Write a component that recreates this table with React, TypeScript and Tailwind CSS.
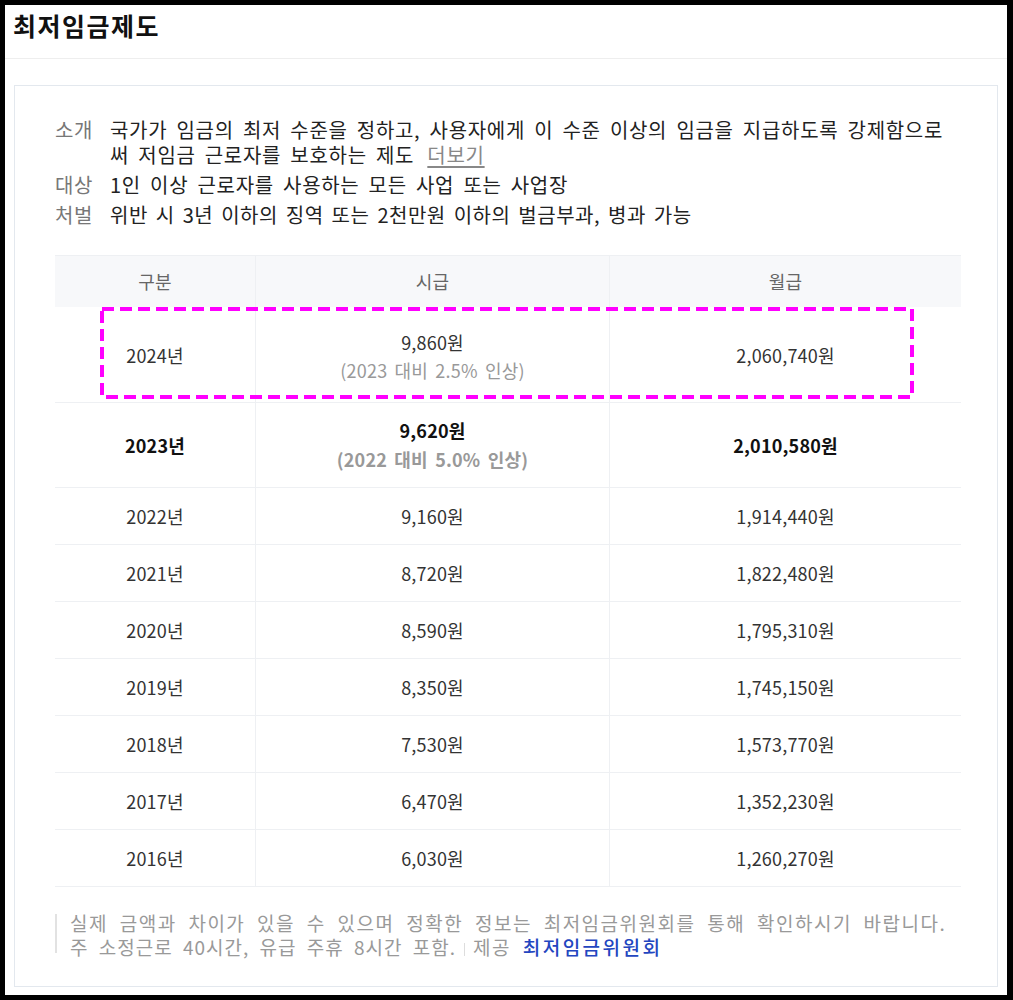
import React from "react";

const rows = [
  { y: "2022년", h: "9,160원", m: "1,914,440원" },
  { y: "2021년", h: "8,720원", m: "1,822,480원" },
  { y: "2020년", h: "8,590원", m: "1,795,310원" },
  { y: "2019년", h: "8,350원", m: "1,745,150원" },
  { y: "2018년", h: "7,530원", m: "1,573,770원" },
  { y: "2017년", h: "6,470원", m: "1,352,230원" },
  { y: "2016년", h: "6,030원", m: "1,260,270원" },
];

const font = { fontFamily: '"Noto Sans CJK KR", "Noto Sans", sans-serif' };

export default function App() {
  return (
    <div
      className="w-[1013px] h-[1000px] bg-black pt-[5px] pl-[5px] pr-[6px] pb-[5px]"
      style={font}
    >
      <div className="bg-white h-full flex flex-col">
        <div className="h-[54px] border-b border-[#eeeeee] pl-[8px] pt-[5px]">
          <h1 className="text-[25px] leading-[30px] font-bold tracking-[1.5px] text-[#111]">최저임금제도</h1>
        </div>
        <div className="mt-[26px] mx-[9px] mb-[8px] flex-1 border border-[#e3e8ee] pl-[40px] pr-[35px] pt-[31px]">
          <dl className="flex flex-col gap-[5px] text-[20px] leading-[25px] tracking-[0.7px] text-[#222] [word-spacing:4px]">
            <div className="flex">
              <dt className="w-[55px] shrink-0 text-[#777]">소개</dt>
              <dd>
                국가가 임금의 최저 수준을 정하고, 사용자에게 이 수준 이상의 임금을 지급하도록 강제함으로
                <br />써 저임금 근로자를 보호하는 제도{" "}
                <span className="ml-[4px] text-[#888] underline underline-offset-[3px]">더보기</span>
              </dd>
            </div>
            <div className="flex">
              <dt className="w-[55px] shrink-0 text-[#777]">대상</dt>
              <dd>1인 이상 근로자를 사용하는 모든 사업 또는 사업장</dd>
            </div>
            <div className="flex">
              <dt className="w-[55px] shrink-0 text-[#777]">처벌</dt>
              <dd className="tracking-[0.5px] [word-spacing:3px]">위반 시 3년 이하의 징역 또는 2천만원 이하의 벌금부과, 병과 가능</dd>
            </div>
          </dl>

          <div className="relative mt-[28px] w-[906px] text-[18px] text-[#333] tracking-[0.2px]">
            <div className="grid grid-cols-[200px_354px_352px] h-[52px] bg-[#f7f8fa] border-t border-[#eef0f3] text-[#666]">
              <div className="flex items-center justify-center">구분</div>
              <div className="flex items-center justify-center border-l border-[#eef0f3]">시급</div>
              <div className="flex items-center justify-center border-l border-[#eef0f3]">월급</div>
            </div>
            <div className="grid grid-cols-[200px_354px_352px] h-[96px] border-b border-[#eef0f3]">
              <div className="flex items-center justify-center pt-[2px]">2024년</div>
              <div className="flex flex-col items-center justify-center border-l border-[#eef0f3] leading-[28px] pt-[2px]">
                <span>9,860원</span>
                <span className="text-[#999] [word-spacing:3px]">(2023 대비 2.5% 인상)</span>
              </div>
              <div className="flex items-center justify-center border-l border-[#eef0f3] pt-[2px]">2,060,740원</div>
            </div>
            <div className="grid grid-cols-[200px_354px_352px] h-[85px] border-b border-[#eef0f3] font-bold text-[#111]">
              <div className="flex items-center justify-center">2023년</div>
              <div className="flex flex-col items-center justify-center border-l border-[#eef0f3] leading-[29px]">
                <span>9,620원</span>
                <span className="text-[#999] [word-spacing:3px]">(2022 대비 5.0% 인상)</span>
              </div>
              <div className="flex items-center justify-center border-l border-[#eef0f3]">2,010,580원</div>
            </div>
            {rows.map((r) => (
              <div
                key={r.y}
                className="grid grid-cols-[200px_354px_352px] h-[57px] border-b border-[#eef0f3]"
              >
                <div className="flex items-center justify-center">{r.y}</div>
                <div className="flex items-center justify-center border-l border-[#eef0f3]">{r.h}</div>
                <div className="flex items-center justify-center border-l border-[#eef0f3]">{r.m}</div>
              </div>
            ))}
            <svg
              className="absolute left-[45px] top-[52px] pointer-events-none"
              width="814"
              height="92"
              viewBox="0 0 814 92"
            >
              <rect
                x="2"
                y="2"
                width="810"
                height="88"
                fill="none"
                stroke="#ff00ff"
                strokeWidth="4"
                strokeDasharray="12 6"
              />
            </svg>
          </div>

          <div className="mt-[24px] flex gap-[13px] text-[19px] leading-[24px] tracking-[1.5px] text-[#999] [word-spacing:6px]">
            <div className="w-[2px] h-[39px] mt-[3px] bg-[#e2e2e2] shrink-0" />
            <p>
              실제 금액과 차이가 있을 수 있으며 정확한 정보는 최저임금위원회를 통해 확인하시기 바랍니다.
              <br />
              <span className="tracking-[1px] [word-spacing:5px]">주 소정근로 40시간, 유급 주휴 8시간 포함.</span>
              <span className="inline-block w-px h-[13px] bg-[#dddddd] mx-[8px] align-[-1px]" />
              <span className="tracking-[1.5px]">제공</span>{" "}
              <span className="text-[#2346c0] font-medium tracking-[2.5px] [word-spacing:0]">최저임금위원회</span>
            </p>
          </div>
        </div>
      </div>
    </div>
  );
}
